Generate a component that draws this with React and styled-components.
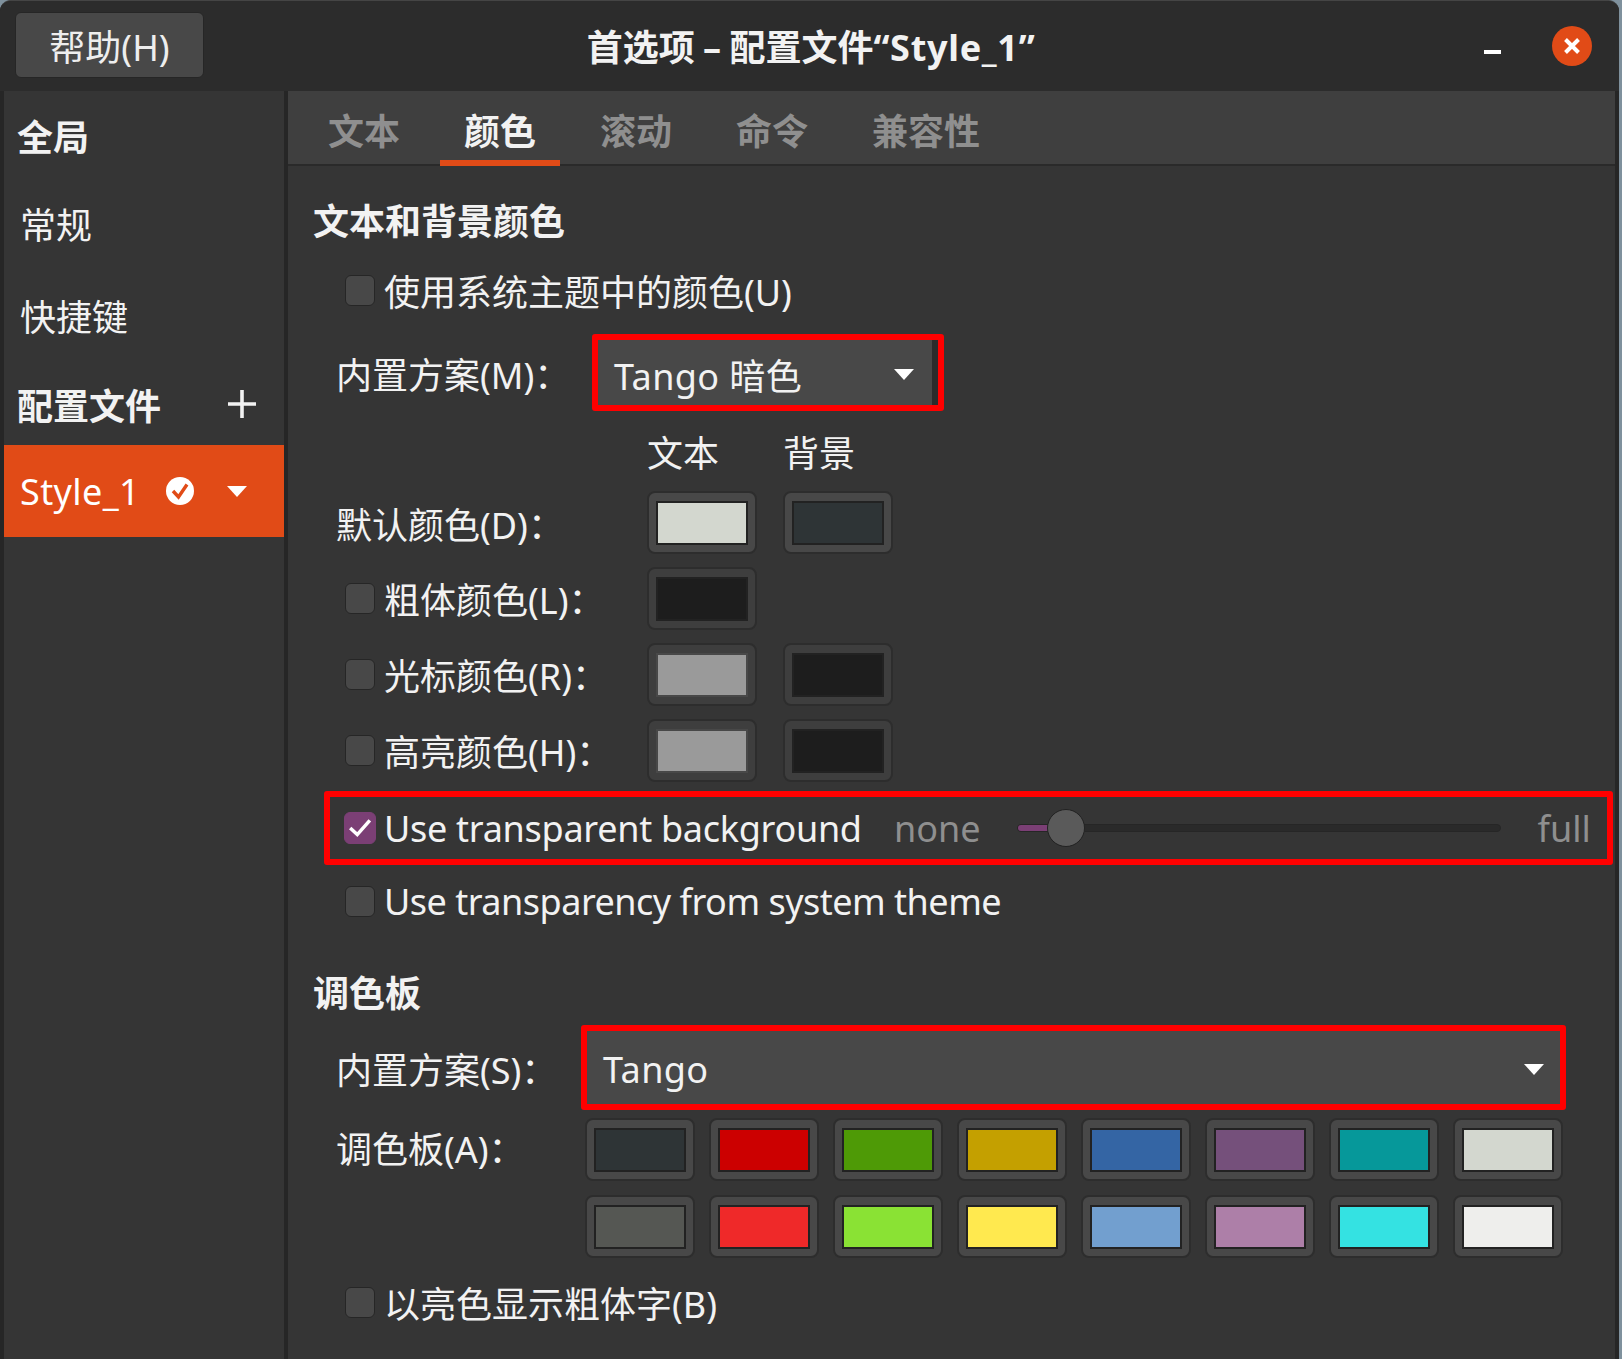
import React from "react"
import styled, { createGlobalStyle } from "styled-components"

const GlobalStyle = createGlobalStyle`
  html, body {
    margin: 0;
    background: #7f919d;
  }
  body {
    font-family: "Noto Sans", "Noto Sans CJK SC", sans-serif;
    font-size: 36px;
    color: #f2f2f2;
  }
`

const Window = styled.div`
  width: 1619px;
  height: 1359px;
  display: flex;
  flex-direction: column;
  overflow: hidden;
  box-sizing: border-box;
  background: #262626;
  border-top: 1px solid #454545;
  border-radius: 11px 11px 0 0;
`

const TitleBar = styled.header`
  height: 90px;
  flex: none;
  display: grid;
  grid-template-columns: 1fr auto 1fr;
  align-items: center;
  padding: 0 15px;
  background: #2c2c2c;
`

const HelpButton = styled.div`
  width: 189px;
  height: 66px;
  margin-top: -2px;
  justify-self: start;
  display: flex;
  align-items: center;
  justify-content: center;
  box-sizing: border-box;
  background: #484848;
  border: 1px solid #262626;
  border-radius: 6px;
  color: #eeeeee;
`

const Title = styled.div`
  font-weight: 700;
  white-space: nowrap;
  margin: -2px 0 0 3px;
`

const TitleDash = styled.span`
  margin: 0 -1px;
`

const TitleName = styled.span`
  letter-spacing: 0.7px;
`

const WindowButtons = styled.div`
  justify-self: end;
  display: flex;
  align-items: center;
  gap: 51px;
  margin-right: 12px;
`

const Minimize = styled.span`
  width: 17px;
  height: 4px;
  margin-top: 12px;
  background: #ffffff;
`

const Close = styled.span`
  width: 40px;
  height: 40px;
  display: flex;
  align-items: center;
  justify-content: center;
  border-radius: 50%;
  background: #e14b17;
`

const Body = styled.div`
  flex: 1;
  display: flex;
  padding: 0 4px 0 4px;
  min-height: 0;
`

const Sidebar = styled.nav`
  width: 280px;
  flex: none;
  display: flex;
  flex-direction: column;
  margin-right: 4px;
  background: #353535;
`

const SideItem = styled.div`
  height: ${p => p.$height}px;
  flex: none;
  display: flex;
  align-items: center;
  justify-content: space-between;
  padding: 0 ${p => (p.$bold ? 28 : 0)}px 0 ${p => (p.$bold ? 13 : 16)}px;
  font-weight: ${p => (p.$bold ? 700 : 400)};
`

const ProfileRow = styled.div`
  height: 92px;
  flex: none;
  display: flex;
  align-items: center;
  padding-left: 16px;
  background: #e14b17;
  color: #ffffff;
`

const ProfileName = styled.span`
  width: 146px;
  letter-spacing: 0.4px;
`

const Caret = styled.span`
  width: 0;
  height: 0;
  flex: none;
  border-left: 10px solid transparent;
  border-right: 10px solid transparent;
  border-top: 11px solid #ffffff;
`

const ProfileCaret = styled(Caret)`
  margin-left: 33px;
`

const Main = styled.main`
  flex: 1;
  min-width: 0;
  display: flex;
  flex-direction: column;
  background: #353535;
`

const TabBar = styled.div`
  height: 75px;
  flex: none;
  display: flex;
  gap: 16px;
  padding-left: 16px;
  box-sizing: border-box;
  background: #3f3f3f;
  border-bottom: 2px solid #2a2a2a;
`

const Tab = styled.div`
  height: 75px;
  box-sizing: border-box;
  padding: 8px 24px 0;
  display: flex;
  align-items: center;
  font-weight: 700;
  color: ${p => (p.$active ? "#f2f2f2" : "#8f8f8f")};
  border-bottom: 6px solid ${p => (p.$active ? "#e14b17" : "transparent")};
`

const Content = styled.div`
  display: flex;
  flex-direction: column;
  padding-left: 25px;
`

const Heading = styled.div`
  height: 44px;
  margin-top: ${p => p.$top}px;
  display: flex;
  align-items: center;
  font-weight: 700;
`

const Row = styled.div`
  height: ${p => p.$height || 44}px;
  margin-top: ${p => p.$top}px;
  padding-left: ${p => p.$indent || 0}px;
  display: flex;
  align-items: ${p => p.$align || "center"};
`

const Label = styled.span`
  width: ${p => p.$width}px;
  flex: none;
  box-sizing: border-box;
  padding: ${p => p.$pad || 2}px 0 0 23px;
  white-space: nowrap;
`

const CheckLabel = styled.label`
  display: flex;
  align-items: center;
  gap: ${p => p.$gap || 9}px;
  white-space: nowrap;
  width: ${p => (p.$width ? `${p.$width}px` : "auto")};
  margin-left: ${p => p.$left || 0}px;
  letter-spacing: ${p => p.$spacing || 0}px;
  flex: none;
`

const CheckBox = styled.span`
  width: ${p => (p.$checked ? 32 : 30)}px;
  height: ${p => (p.$checked ? 32 : 31)}px;
  flex: none;
  box-sizing: border-box;
  display: flex;
  align-items: center;
  justify-content: center;
  border-radius: 6px;
  border: 1px solid ${p => (p.$checked ? "#7b3f75" : "#262626")};
  background: ${p => (p.$checked ? "#7b3f75" : "#484848")};
`

const RedBox = styled.div`
  width: ${p => p.$width}px;
  height: ${p => p.$height}px;
  margin-left: ${p => p.$left || 0}px;
  flex: none;
  box-sizing: border-box;
  border: 6px solid #ff0000;
  border-radius: 3px;
  display: flex;
  align-items: center;
`

const Combo = styled.div`
  flex: 1;
  align-self: stretch;
  display: flex;
  align-items: center;
  justify-content: space-between;
  padding: 4px ${p => p.$right}px 0 16px;
  background: #484848;
  border-right: ${p => (p.$edge ? "6px solid #2b2b2b" : "none")};
  letter-spacing: 0.4px;
`

const ColumnHeads = styled.div`
  height: 44px;
  margin-top: 14px;
  padding-left: 334px;
  display: flex;
  gap: 64px;
`

const ColorButton = styled.div`
  width: 110px;
  height: 63px;
  flex: none;
  box-sizing: border-box;
  display: flex;
  align-items: center;
  justify-content: center;
  border: 2px solid #2d2d2d;
  border-radius: 8px;
  background: ${p => (p.$dim ? "#3e3e3e" : "#484848")};
`

const Swatch = styled.span`
  width: 92px;
  height: 44px;
  box-sizing: border-box;
  border: 2px solid ${p => (p.$dim ? "#484848" : "#222222")};
  background: ${p => p.$color};
`

const ButtonPair = styled.div`
  display: flex;
  gap: 26px;
`

const MutedText = styled.span`
  color: #8f8f8f;
`

const Track = styled.div`
  width: 484px;
  height: 8px;
  margin: 0 37px 0 36px;
  flex: none;
  box-sizing: border-box;
  position: relative;
  border: 1px solid #262626;
  border-radius: 4px;
  background: #2a2a2a;
`

const TrackFill = styled.div`
  width: 48px;
  height: 100%;
  border-radius: 4px 0 0 4px;
  background: #7b3f75;
`

const Thumb = styled.div`
  position: absolute;
  left: 29px;
  top: -16px;
  width: 38px;
  height: 38px;
  box-sizing: border-box;
  border: 1px solid #222222;
  border-radius: 50%;
  background: #5a5a5a;
`

const Palette = styled.div`
  display: grid;
  grid-template-columns: repeat(8, 110px);
  gap: 14px;
`

const darkColors = ["#2e3436", "#cc0000", "#4e9a06", "#c4a000", "#3465a4", "#75507b", "#06989a", "#d3d7cf"]
const lightColors = ["#555753", "#ef2929", "#8ae234", "#ffe94f", "#729fcf", "#ad7fa8", "#34e2e2", "#eeeeec"]

const colorRows = [
  { label: "粗体颜色(L)：", colors: ["#1d1d1d"] },
  { label: "光标颜色(R)：", colors: ["#9a9a9a", "#1d1d1d"] },
  { label: "高亮颜色(H)：", colors: ["#9a9a9a", "#1d1d1d"] },
]

const Tick = () => (
  <svg width="24" height="24" viewBox="0 0 22 22" fill="none">
    <path d="M2 11 L8.5 17 L20 4" stroke="#ffffff" strokeWidth="3.2" />
  </svg>
)

const App = () => (
  <>
    <GlobalStyle />
    <Window>
      <TitleBar>
        <HelpButton>帮助(H)</HelpButton>
        <Title>首选项 <TitleDash>–</TitleDash> 配置文件<TitleName>“Style_1”</TitleName></Title>
        <WindowButtons>
          <Minimize />
          <Close>
            <svg width="18" height="18" viewBox="0 0 18 18">
              <path d="M2.5 2.5 L15.5 15.5 M15.5 2.5 L2.5 15.5" stroke="#ffffff" strokeWidth="4" />
            </svg>
          </Close>
        </WindowButtons>
      </TitleBar>
      <Body>
        <Sidebar>
          <SideItem $bold $height={88}>全局</SideItem>
          <SideItem $height={88}>常规</SideItem>
          <SideItem $height={96}>快捷键</SideItem>
          <SideItem $bold $height={82}>
            配置文件
            <svg width="28" height="28" viewBox="0 0 28 28">
              <path d="M14 0 V28 M0 14 H28" stroke="#f2f2f2" strokeWidth="3.6" />
            </svg>
          </SideItem>
          <ProfileRow>
            <ProfileName>Style_1</ProfileName>
            <svg width="28" height="28" viewBox="0 0 28 28">
              <circle cx="14" cy="14" r="14" fill="#ffffff" />
              <path d="M7 14 L12.5 20 L21 7.5" stroke="#e14b17" strokeWidth="3.4" fill="none" />
            </svg>
            <ProfileCaret />
          </ProfileRow>
        </Sidebar>
        <Main>
          <TabBar>
            <Tab>文本</Tab>
            <Tab $active>颜色</Tab>
            <Tab>滚动</Tab>
            <Tab>命令</Tab>
            <Tab>兼容性</Tab>
          </TabBar>
          <Content>
            <Heading $top={31}>文本和背景颜色</Heading>
            <Row $top={27} $indent={32}>
              <CheckLabel><CheckBox />使用系统主题中的颜色(U)</CheckLabel>
            </Row>
            <Row $top={22} $height={77}>
              <Label $width={279}>内置方案(M)：</Label>
              <RedBox $width={352} $height={77}>
                <Combo $edge $right={18}>
                  Tango 暗色
                  <Caret />
                </Combo>
              </RedBox>
            </Row>
            <ColumnHeads>
              <span>文本</span>
              <span>背景</span>
            </ColumnHeads>
            <Row $top={22} $height={63}>
              <Label $width={334}>默认颜色(D)：</Label>
              <ButtonPair>
                <ColorButton><Swatch $color="#d3d7cf" /></ColorButton>
                <ColorButton><Swatch $color="#2e3436" /></ColorButton>
              </ButtonPair>
            </Row>
            {colorRows.map(row => (
              <Row key={row.label} $top={13} $height={63} $indent={32}>
                <CheckLabel $width={302}><CheckBox />{row.label}</CheckLabel>
                <ButtonPair>
                  {row.colors.map((color, i) => (
                    <ColorButton key={i} $dim>
                      <Swatch $color={color} $dim={color !== "#1d1d1d"} />
                    </ColorButton>
                  ))}
                </ButtonPair>
              </Row>
            ))}
            <Row $top={9} $height={74}>
              <RedBox $width={1289} $height={74} $left={11}>
                <CheckLabel $width={550} $left={14} $gap={8} $spacing={-0.28}>
                  <CheckBox $checked><Tick /></CheckBox>
                  Use transparent background
                </CheckLabel>
                <MutedText>none</MutedText>
                <Track>
                  <TrackFill />
                  <Thumb />
                </Track>
                <MutedText>full</MutedText>
              </RedBox>
            </Row>
            <Row $top={14} $indent={32}>
              <CheckLabel $spacing={-0.5}><CheckBox />Use transparency from system theme</CheckLabel>
            </Row>
            <Heading $top={46}>调色板</Heading>
            <Row $top={12} $height={85}>
              <Label $width={268}>内置方案(S)：</Label>
              <RedBox $width={985} $height={85}>
                <Combo $right={16}>
                  Tango
                  <Caret />
                </Combo>
              </RedBox>
            </Row>
            <Row $top={8} $height={140} $align="flex-start">
              <Label $width={272} $pad={3}>调色板(A)：</Label>
              <Palette>
                {[...darkColors, ...lightColors].map((color, i) => (
                  <ColorButton key={i}><Swatch $color={color} /></ColorButton>
                ))}
              </Palette>
            </Row>
            <Row $top={22} $indent={32}>
              <CheckLabel><CheckBox />以亮色显示粗体字(B)</CheckLabel>
            </Row>
          </Content>
        </Main>
      </Body>
    </Window>
  </>
)

export default App
